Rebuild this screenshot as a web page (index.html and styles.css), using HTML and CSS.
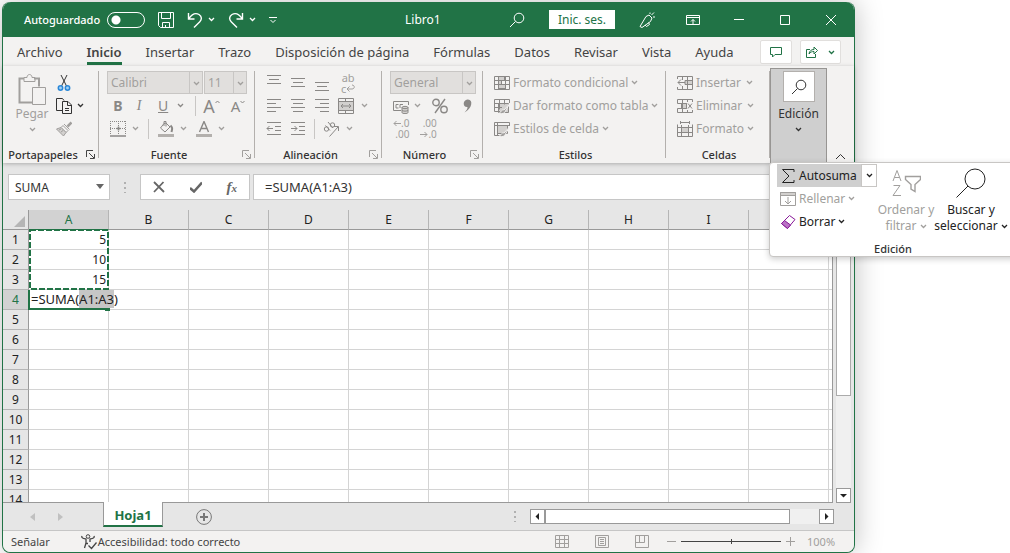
FILE: index.html
```html
<!DOCTYPE html>
<html lang="es">
<head>
  <meta charset="UTF-8">
  <meta name="viewport" content="width=device-width, initial-scale=1.0">
  <title>Libro1</title>
  <link rel="stylesheet" href="styles.css">
</head>
<body>
  <svg class="defs" aria-hidden="true">
    <symbol id="chev" viewBox="0 0 7 5"><path d="M1 1l2.5 2.5L6 1" fill="none" stroke="currentColor" stroke-width="1.3"/></symbol>
    <symbol id="lens" viewBox="0 0 16 16"><circle cx="10" cy="6" r="4.8"/><path d="M6.5 9.5L1 15"/></symbol>
    <symbol id="launch" viewBox="0 0 9 9"><path d="M.5 7V.5H7M3 3l5 5M8.500 4v4.500H4"/></symbol>
  </svg>

  <div class="window">
    <header class="titlebar">
      <div class="quick">
        <label class="autosave">Autoguardado <input type="checkbox" class="toggle"></label>
        <button class="tool" aria-label="Guardar"><svg class="icon" viewBox="0 0 16 16"><path d="M.5.5h15v15h-13l-2-2zM3.500.5v6h9v-6M4.500 15.500v-5h7v5M7.500 15v-2"/></svg></button>
        <button class="tool split" aria-label="Deshacer"><svg class="icon arrow" viewBox="0 0 16 16"><path d="M1.500 1v6h6M1.800 6.700C5 2 9 .8 12 2.500c3 2 3 5 .8 7.200L7 15.500"/></svg><svg class="chev"><use href="#chev"/></svg></button>
        <button class="tool split" aria-label="Rehacer"><svg class="icon arrow" viewBox="0 0 16 16"><path d="M14.500 1v6h-6M14.200 6.700C11 2 7 .8 4 2.500c-3 2-3 5-.8 7.200L9 15.500"/></svg><svg class="chev"><use href="#chev"/></svg></button>
        <button class="tool" aria-label="Personalizar"><svg class="small" viewBox="0 0 8 8"><path d="M0 1.500h8M1.500 4L4 6.500 6.500 4"/></svg></button>
      </div>
      <span class="book">Libro1</span>
      <div class="session">
        <button class="tool" aria-label="Buscar"><svg class="icon"><use href="#lens"/></svg></button>
        <button class="signin">Inic. ses.</button>
        <button class="tool" aria-label="Novedades"><svg class="icon" viewBox="0 0 16 16"><path d="M1 14.500L7 4.500l3-1.500 3 3-1.500 3.500L3 15.500zM6 13l1.500 1.500 3-2-1-2M11 2V.5M12.500 3L15 .5M14 5h2"/></svg></button>
      </div>
      <div class="controls">
        <button class="tool" aria-label="Cinta"><svg class="icon" viewBox="0 0 14 14"><path d="M.5 2.500h13v9H.5zM.5 4.500h13M7 11V6.500M5 8.500l2-2 2 2"/></svg></button>
        <button class="tool" aria-label="Minimizar"><svg class="icon" viewBox="0 0 14 14"><path d="M2 6.500h10"/></svg></button>
        <button class="tool" aria-label="Maximizar"><svg class="icon" viewBox="0 0 14 14"><path d="M2.500 2.500h9v9h-9z"/></svg></button>
        <button class="tool" aria-label="Cerrar"><svg class="icon" viewBox="0 0 14 14"><path d="M2 2l10 10M12 2L2 12"/></svg></button>
      </div>
    </header>

    <nav class="tabs">
      <a href="#">Archivo</a>
      <a href="#" class="current">Inicio</a>
      <a href="#">Insertar</a>
      <a href="#">Trazo</a>
      <a href="#">Disposición de página</a>
      <a href="#">Fórmulas</a>
      <a href="#">Datos</a>
      <a href="#">Revisar</a>
      <a href="#">Vista</a>
      <a href="#">Ayuda</a>
      <div class="share">
        <button aria-label="Comentarios"><svg class="glyph" viewBox="0 0 12 12"><path d="M.5 1.500h11v7H5L2.500 11V8.500h-2z"/></svg></button>
        <button aria-label="Compartir"><svg class="glyph" viewBox="0 0 12 12"><path d="M4 3.500H.5v8h9V8M3 8c.5-3 2-4.500 5-4.500V1l3.500 3.500L8 8V5.500C6 5.500 4.500 6 3 8z"/></svg><svg class="chev"><use href="#chev"/></svg></button>
      </div>
    </nav>

    <div class="ribbon">
      <section class="group clipboard">
        <div class="pair">
          <button class="paste"><svg viewBox="0 0 28 32"><path d="M6 4.500H1.500v24H14M16 4.500h5v8" stroke-width="2"/><path d="M6 3.500h3c0-4 5-4 5 0h3v4H6z"/><path class="sheet" d="M14.500 13.500h13v17h-13z"/></svg>Pegar<svg class="chev"><use href="#chev"/></svg></button>
          <div class="rows dark">
            <div class="row"><button class="tool" aria-label="Cortar"><svg class="icon" viewBox="0 0 16 16"><path d="M5 0l5.500 11M11 0L5.500 11"/><circle class="blue" cx="4.500" cy="13" r="2.200"/><circle class="blue" cx="11.500" cy="13" r="2.200"/></svg></button></div>
            <div class="row"><button class="tool split" aria-label="Copiar"><svg class="icon" viewBox="0 0 16 16"><path d="M6 12.500H.5V.5h6l1.500 2M6.500 3.500H12l3.500 3.500v8.500h-9zM11.500 3.500v4h4M9 10.500h4M9 12.500h4"/></svg><svg class="chev"><use href="#chev"/></svg></button></div>
            <div class="row"><button class="tool gray" aria-label="Copiar formato"><svg class="icon" viewBox="0 0 16 16"><path d="M15.500 1.500l-4 4" stroke-width="2.500"/><path d="M8 3l5.500 5.500M7 4.500l5 5-2 2-5-5z"/><path class="fill" d="M5 6.500L.5 8l7 7L10 11.500zM3 9l2-1M5 11l2-1.500"/></svg></button></div>
          </div>
        </div>
        <h2>Portapapeles <button class="launch on" aria-label="Más portapapeles"><svg><use href="#launch"/></svg></button></h2>
      </section>

      <section class="group font">
        <div class="rows">
          <div class="row">
            <span class="select name"><select aria-label="Fuente" disabled><option>Calibri</option></select><svg class="chev"><use href="#chev"/></svg></span>
            <span class="select size"><select aria-label="Tamaño" disabled><option>11</option></select><svg class="chev"><use href="#chev"/></svg></span>
          </div>
          <div class="row letters">
            <button class="tool"><b>B</b></button>
            <button class="tool"><i>I</i></button>
            <button class="tool split"><u>U</u><svg class="chev"><use href="#chev"/></svg></button>
            <span class="rule"></span>
            <button class="tool big">A<svg class="caret" viewBox="0 0 5 4"><path d="M.5 3l2-2 2 2"/></svg></button>
            <button class="tool mid">A<svg class="caret" viewBox="0 0 5 4"><path d="M.5 1l2 2 2-2"/></svg></button>
          </div>
          <div class="row colors">
            <button class="tool split" aria-label="Bordes"><svg class="icon" viewBox="0 0 16 16"><path d="M.5 0v14M15.500 0v14M8.500 0v14M0 .5h16M0 7.500h16" stroke-dasharray="1 1"/><path d="M0 15h16M6.500 7.500h4M8.500 5.500v4" stroke-width="1.500"/></svg><svg class="chev"><use href="#chev"/></svg></button>
            <span class="rule"></span>
            <button class="tool split" aria-label="Relleno"><svg class="icon" viewBox="0 0 16 16"><path d="M6 2.500L2.500 7l4.500 4 5-5-4-4zM6 5V.5h2v5"/><path d="M12.500 4.500c2 2 2 3 1 6.500" stroke-width="2"/><path class="bar" d="M0 13h16v3H0z"/></svg><svg class="chev"><use href="#chev"/></svg></button>
            <button class="tool split" aria-label="Color"><svg class="icon" viewBox="0 0 16 16"><path d="M3.500 11L8 .5 12.500 11M5 7.500h6" stroke-width="1.400"/><path class="bar" d="M0 13h16v3H0z"/></svg><svg class="chev"><use href="#chev"/></svg></button>
          </div>
        </div>
        <h2>Fuente <button class="launch" aria-label="Más fuente"><svg><use href="#launch"/></svg></button></h2>
      </section>

      <section class="group align">
        <div class="rows">
          <div class="row">
            <button class="tool" aria-label="Arriba"><svg class="icon" viewBox="0 0 16 16"><path d="M1 .5h14M3 4.500h10M1 8.500h14"/></svg></button>
            <button class="tool" aria-label="Medio"><svg class="icon" viewBox="0 0 16 16"><path d="M1 3.500h14M3 7.500h10M1 11.500h14"/></svg></button>
            <button class="tool" aria-label="Abajo"><svg class="icon" viewBox="0 0 16 16"><path d="M1 7.500h14M3 11.500h10M1 15.500h14"/></svg></button>
            <button class="tool wrap" aria-label="Ajustar texto"><span>ab</span><span>c<svg viewBox="0 0 9 7"><path d="M6 .5c3 0 3 4 0 4H1M3.500 2L1 4.500 3.500 7"/></svg></span></button>
          </div>
          <div class="row">
            <button class="tool" aria-label="Izquierda"><svg class="icon" viewBox="0 0 16 16"><path d="M1 1.500h14M1 5.500h9M1 9.500h14M1 13.500h9"/></svg></button>
            <button class="tool" aria-label="Centro"><svg class="icon" viewBox="0 0 16 16"><path d="M1 1.500h14M3 5.500h10M1 9.500h14M3 13.500h10"/></svg></button>
            <button class="tool" aria-label="Derecha"><svg class="icon" viewBox="0 0 16 16"><path d="M1 1.500h14M6 5.500h9M1 9.500h14M6 13.500h9"/></svg></button>
            <button class="tool split" aria-label="Combinar"><svg class="icon" viewBox="0 0 16 16"><path class="fill" d="M.5 3.500h15v9H.5z"/><path d="M.5.5h15v15H.5zM.5 3.500h15M.5 12.500h15M7.500.5v3M7.500 12.500v3M3 8h10M5 6L3 8l2 2M11 6l2 2-2 2"/></svg><svg class="chev"><use href="#chev"/></svg></button>
          </div>
          <div class="row">
            <button class="tool" aria-label="Disminuir sangría"><svg class="icon" viewBox="0 0 16 16"><path d="M1 1.500h14M9 5.500h6M9 9.500h6M1 13.500h14M1 7.500h6M3.500 5L1 7.500 3.500 10"/></svg></button>
            <button class="tool" aria-label="Aumentar sangría"><svg class="icon" viewBox="0 0 16 16"><path d="M1 1.500h14M9 5.500h6M9 9.500h6M1 13.500h14M1 7.500h6M4.500 5L7 7.500 4.500 10"/></svg></button>
            <span class="rule"></span>
            <button class="tool split" aria-label="Orientación"><svg class="icon" viewBox="0 0 16 16"><circle cx="3.500" cy="8" r="2.200"/><path d="M2.500 4.500L7 9.500M5 1l5 6M6.500 15.500L15 6M11 5.500h4.500V10"/><circle cx="9.500" cy="4" r="2.200"/></svg><svg class="chev"><use href="#chev"/></svg></button>
          </div>
        </div>
        <h2>Alineación <button class="launch" aria-label="Más alineación"><svg><use href="#launch"/></svg></button></h2>
      </section>

      <section class="group number">
        <div class="rows">
          <div class="row"><span class="select format"><select aria-label="Formato" disabled><option>General</option></select><svg class="chev"><use href="#chev"/></svg></span></div>
          <div class="row">
            <button class="tool split" aria-label="Moneda"><svg class="icon" viewBox="0 0 16 16"><path d="M8 12.500H.5v-9h15V7M5.500 6.500H3v3.500h2.500M7 10V6.500h3"/><path class="fill" d="M9 9.500v5c0 1.500 6 1.500 6 0v-5c0-1.500-6-1.500-6 0zM9 9.500c0 1.500 6 1.500 6 0M9 12c0 1.500 6 1.500 6 0"/></svg><svg class="chev"><use href="#chev"/></svg></button>
            <button class="tool" aria-label="Porcentaje"><svg class="icon" viewBox="0 0 16 16"><g stroke-width="1.400"><circle cx="4" cy="4.500" r="3.200"/><circle cx="12" cy="11.500" r="3.200"/><path d="M13 1L3 15"/></g></svg></button>
            <button class="tool" aria-label="Millares"><svg class="icon" viewBox="0 0 16 16"><path class="solid" d="M8.500 1.500c6-.5 5 9-3 13 2-2 3-3.500 3-5.500-5 .5-5-7 0-7.500z"/></svg></button>
          </div>
          <div class="row">
            <button class="tool decimals" aria-label="Aumentar decimales"><span><svg viewBox="0 0 8 7"><path d="M8 3.500H1M3.500 1L1 3.500 3.500 6"/></svg>.0</span><span>.00</span></button>
            <button class="tool decimals" aria-label="Disminuir decimales"><span>.00</span><span><svg viewBox="0 0 8 7"><path d="M0 3.500h7M4.500 1L7 3.500 4.500 6"/></svg>.0</span></button>
          </div>
        </div>
        <h2>Número <button class="launch" aria-label="Más número"><svg><use href="#launch"/></svg></button></h2>
      </section>

      <section class="group styles">
        <div class="rows">
          <div class="row"><button class="tool text"><svg class="icon" viewBox="0 0 16 16"><path class="fill" d="M4.500 1.500h6v4h-3v4h4v4h-7z"/><path d="M.5 1.500h15v13H.5zM.5 5.500h15M.5 9.500h15M4.500 1.500v13M11.500 1.500v13"/></svg>Formato condicional<svg class="chev"><use href="#chev"/></svg></button></div>
          <div class="row"><button class="tool text"><svg class="icon" viewBox="0 0 16 16"><path class="fill" d="M4.500 5.500h10v9h-10z"/><path d="M6 13.500H.5v-12h15V5M.5 5.500H12M.5 9.500H8M5.500 1.500v10M10.500 1.500v5"/><path class="brush" d="M15.500 6L10 12c-2-1-3 2-5 3.500 3 .5 6 0 6.500-2.500z"/></svg>Dar formato como tabla<svg class="chev"><use href="#chev"/></svg></button></div>
          <div class="row"><button class="tool text"><svg class="icon" viewBox="0 0 16 16"><path class="fill" d="M3.500 4.500h10v8h-10z"/><path d="M6 14.500H.5v-13h15V5M.5 4.500h15M3.500 1.500v13"/><path class="brush" d="M15.500 6L10 12c-2-1-3 2-5 3.500 3 .5 6 0 6.500-2.500z"/></svg>Estilos de celda<svg class="chev"><use href="#chev"/></svg></button></div>
        </div>
        <h2>Estilos</h2>
      </section>

      <section class="group cells">
        <div class="rows">
          <div class="row"><button class="tool text wide"><svg class="icon" viewBox="0 0 16 16"><path class="fill" d="M8 5.500h7.500v4H8z"/><path d="M.5 4V1.500h15v13H.5V12M5.500 1.500V5M10.500 1.500v13M5.500 11v3.500M8 5.500h7.500M8 9.500h7.500M1 7.500h7M4 4.500l-3 3 3 3"/></svg>Insertar<svg class="chev"><use href="#chev"/></svg></button></div>
          <div class="row"><button class="tool text wide"><svg class="icon" viewBox="0 0 16 16"><path class="fill" d="M4.500 5.500h5v5h-5z"/><path d="M.5 5.500v-4h15V4M.5 5.500h9v5h-9v4h15V12M5.500 1.500v13M10.500 1.500V4M10.500 12v2.500M11 5.500l4 5M15 5.500l-4 5"/></svg>Eliminar<svg class="chev"><use href="#chev"/></svg></button></div>
          <div class="row"><button class="tool text"><svg class="icon" viewBox="0 0 16 16"><path class="fill" d="M4.500 6.500h7v5h-7z"/><path d="M.5 3.500v12h15v-12M.5 6.500h15M.5 11.500h15M4.500 4v11.500M11.500 4v11.500M3 1.500h10M3.500 0v3M12.500 0v3"/></svg>Formato<svg class="chev"><use href="#chev"/></svg></button></div>
        </div>
        <h2>Celdas</h2>
      </section>

      <div class="editing">
        <button class="open"><span class="tile"><svg class="icon"><use href="#lens"/></svg></span>Edición<svg class="chev"><use href="#chev"/></svg></button>
        <div class="flyout">
          <div class="actions">
            <div class="sum"><button class="main"><svg class="icon" viewBox="0 0 16 16"><path d="M14 4V1.500H2.500L9 8l-6.500 6.500H14V12"/></svg>Autosuma</button><button class="more" aria-label="Más sumas"><svg class="chev"><use href="#chev"/></svg></button></div>
            <button class="item off"><svg class="icon" viewBox="0 0 16 16"><path class="fill" d="M.5 1.500h15v3H.5z"/><path d="M.5 1.500h15v13H.5zM.5 4.500h15M8 6v7M5 10l3 3 3-3"/></svg>Rellenar<svg class="chev"><use href="#chev"/></svg></button>
            <button class="item"><svg class="icon" viewBox="0 0 16 16"><path class="eraser" d="M9.500 1.500l5.500 4-7.500 9-6-5z"/><path class="tip" d="M4.500 6.500l6 4.500-3 3.500-6-5z"/></svg>Borrar<svg class="chev"><use href="#chev"/></svg></button>
          </div>
          <button class="large off"><svg viewBox="0 0 30 30"><path d="M2 13L6 2.500 10 13M3.500 9.500h5M2.500 17.500H9L2 27.500h8"/><path d="M14.500 8.500h15v3l-5.500 5v7l-4-2.500v-4.500l-5.500-5z" stroke-width="1.400"/></svg><span>Ordenar y<br>filtrar <svg class="chev"><use href="#chev"/></svg></span></button>
          <button class="large"><svg viewBox="0 0 30 30"><circle cx="19" cy="11" r="10"/><path d="M12 18L.5 29.500"/></svg><span>Buscar y<br>seleccionar <svg class="chev"><use href="#chev"/></svg></span></button>
          <h2>Edición</h2>
        </div>
      </div>
      <button class="collapse" aria-label="Contraer"><svg viewBox="0 0 11 7"><path d="M1 6l4.500-4.500L10 6"/></svg></button>
    </div>

    <div class="formula">
      <label class="namebox"><input type="text" value="SUMA" aria-label="Cuadro de nombres"><svg viewBox="0 0 8 5"><path d="M0 0h8L4 5z"/></svg></label>
      <span class="dots"></span>
      <div class="entry">
        <button aria-label="Cancelar"><svg viewBox="0 0 12 12"><path d="M1 1l10 10M10.500 1L1 11"/></svg></button>
        <button aria-label="Introducir"><svg viewBox="0 0 12 12"><path d="M0 7l4 3.500L12 1.500" stroke-width="2.500"/></svg></button>
        <button class="fx" aria-label="Insertar función">f<small>x</small></button>
      </div>
      <input type="text" class="expression" value="=SUMA(A1:A3)" aria-label="Barra de fórmulas">
    </div>

    <div class="workspace">
      <div class="grid">
        <table>
          <thead>
            <tr><th class="corner"><svg viewBox="0 0 11 11"><path d="M11 0v11H0z"/></svg></th><th class="active">A</th><th>B</th><th>C</th><th>D</th><th>E</th><th>F</th><th>G</th><th>H</th><th>I</th><th>J</th><th class="rest"></th></tr>
          </thead>
          <tbody>
            <tr><th>1</th><td class="origin">5<svg class="ants"><rect x="1" y="1" width="78" height="59"/></svg></td><td></td><td></td><td></td><td></td><td></td><td></td><td></td><td></td><td></td><td></td></tr>
            <tr><th>2</th><td>10</td><td></td><td></td><td></td><td></td><td></td><td></td><td></td><td></td><td></td><td></td></tr>
            <tr><th>3</th><td>15</td><td></td><td></td><td></td><td></td><td></td><td></td><td></td><td></td><td></td><td></td></tr>
            <tr><th class="active">4</th><td class="editor"><span class="typed">=SUMA(<mark>A1:A3</mark>)</span></td><td></td><td></td><td></td><td></td><td></td><td></td><td></td><td></td><td></td><td></td></tr>
            <tr><th>5</th><td></td><td></td><td></td><td></td><td></td><td></td><td></td><td></td><td></td><td></td><td></td></tr>
            <tr><th>6</th><td></td><td></td><td></td><td></td><td></td><td></td><td></td><td></td><td></td><td></td><td></td></tr>
            <tr><th>7</th><td></td><td></td><td></td><td></td><td></td><td></td><td></td><td></td><td></td><td></td><td></td></tr>
            <tr><th>8</th><td></td><td></td><td></td><td></td><td></td><td></td><td></td><td></td><td></td><td></td><td></td></tr>
            <tr><th>9</th><td></td><td></td><td></td><td></td><td></td><td></td><td></td><td></td><td></td><td></td><td></td></tr>
            <tr><th>10</th><td></td><td></td><td></td><td></td><td></td><td></td><td></td><td></td><td></td><td></td><td></td></tr>
            <tr><th>11</th><td></td><td></td><td></td><td></td><td></td><td></td><td></td><td></td><td></td><td></td><td></td></tr>
            <tr><th>12</th><td></td><td></td><td></td><td></td><td></td><td></td><td></td><td></td><td></td><td></td><td></td></tr>
            <tr><th>13</th><td></td><td></td><td></td><td></td><td></td><td></td><td></td><td></td><td></td><td></td><td></td></tr>
            <tr><th>14</th><td></td><td></td><td></td><td></td><td></td><td></td><td></td><td></td><td></td><td></td><td></td></tr>
          </tbody>
        </table>
      </div>
      <div class="vscroll">
        <span class="thumb"></span>
        <button class="step" aria-label="Bajar"><svg viewBox="0 0 7 7"><path d="M0 2h7L3.500 5.500z"/></svg></button>
      </div>
    </div>

    <div class="sheets">
      <button class="nav" aria-label="Anterior"><svg viewBox="0 0 5 8"><path d="M5 0v8L0 4z"/></svg></button>
      <button class="nav" aria-label="Siguiente"><svg viewBox="0 0 5 8"><path d="M0 0v8l5-4z"/></svg></button>
      <button class="sheet-tab">Hoja1</button>
      <button class="add" aria-label="Nueva hoja"><svg viewBox="0 0 16 16"><circle cx="8" cy="8" r="7.400"/><path d="M8 4v8M4 8h8" stroke-width="2"/></svg></button>
      <span class="dots"></span>
      <div class="hscroll">
        <button class="step" aria-label="A la izquierda"><svg viewBox="0 0 7 7"><path d="M5 0v7L1.500 3.500z"/></svg></button>
        <span class="thumb"></span>
        <button class="step" aria-label="A la derecha"><svg viewBox="0 0 7 7"><path d="M2 0v7l3.500-3.500z"/></svg></button>
      </div>
    </div>

    <footer class="status">
      <span>Señalar</span>
      <span class="access"><svg viewBox="0 0 16 16"><circle cx="7" cy="2.500" r="1.800"/><path d="M1 2c-1 2 2 2.500 4 3v4l-1.500 5M13 2c1 2-2 2.500-4 3v3M5 9.500h2M7.500 11.500l3 3 5-6" stroke-width="1.300"/></svg>Accesibilidad: todo correcto</span>
      <div class="views">
        <button aria-label="Normal"><svg viewBox="0 0 14 14"><path d="M.5.5h13v12H.5zM4.500.5v12M9.500.5v12M.5 4.500h13M.5 8.500h13"/></svg></button>
        <button aria-label="Diseño de página"><svg viewBox="0 0 14 14"><path d="M.5.5h13v12H.5zM3.500 2.500h7v8h-7zM5 4.500h4M5 6.500h4M5 8.500h4"/></svg></button>
        <button aria-label="Saltos de página"><svg viewBox="0 0 14 14"><path d="M.5.5h13v12H.5zM4.500.5v7M9.500.5v7M.5 7.500h9"/></svg></button>
      </div>
      <div class="zoom">
        <button aria-label="Alejar"><svg viewBox="0 0 9 9"><path d="M0 4.500h9"/></svg></button>
        <input type="range" min="10" max="190" value="100" aria-label="Zoom">
        <button aria-label="Acercar"><svg viewBox="0 0 9 9"><path d="M0 4.500h9M4.500 0v9"/></svg></button>
      </div>
      <span class="percent">100%</span>
    </footer>
  </div>
</body>
</html>
```
FILE: styles.css
```css
* {
  box-sizing: border-box;
}
body {
  margin: 0;
  padding: 2px 155px 0 2px;
  height: 100vh;
  overflow: hidden;
  background: #fff;
  color: #444;
  font: 12px/16px "Noto Sans", "Open Sans", sans-serif;
}
button {
  padding: 0;
  border: 0;
  background: none;
  color: inherit;
  font: inherit;
}
svg {
  display: block;
  flex: none;
  fill: none;
  stroke: currentColor;
}
h2 {
  margin: 0;
  font-size: 11px;
  font-weight: 500;
  line-height: 16px;
  color: #333;
  text-align: center;
}
.defs {
  position: absolute;
  width: 0;
  height: 0;
}
.icon {
  width: 16px;
  height: 16px;
}
.chev {
  width: 7px;
  height: 5px;
}
.fill {
  fill: #d2d0ce;
}
.window {
  display: flex;
  flex-direction: column;
  height: 100%;
  border: 1px solid #217346;
  border-top: 0;
  border-radius: 8px;
  background: #e6e6e6;
  box-shadow: 0 0 28px rgba(0, 0, 0, 0.25);
}

/* title bar */
.titlebar {
  display: grid;
  grid-template-columns: 402px 1fr auto auto;
  align-items: center;
  height: 35px;
  padding-right: 16px;
  border-radius: 8px 8px 0 0;
  background: #217346;
  color: #fff;
}
.quick {
  display: flex;
  align-items: center;
  gap: 13px;
  padding-left: 21px;
}
.autosave {
  display: flex;
  align-items: center;
  gap: 7px;
  font-size: 11px;
  font-weight: 500;
}
.arrow {
  stroke-width: 1.4;
}
.toggle {
  appearance: none;
  width: 38px;
  height: 16px;
  margin: 0;
  border: 1px solid #fff;
  border-radius: 8px;
  background: radial-gradient(circle at 8px 7px, #fff 4px, transparent 5px);
}
.tool {
  display: flex;
  align-items: center;
  justify-content: center;
}
.split {
  gap: 5px;
}
.small {
  width: 8px;
  height: 8px;
}
.session {
  display: flex;
  align-items: center;
  gap: 24px;
}
.signin {
  width: 66px;
  height: 19px;
  background: #fff;
  color: #217346;
}
.controls {
  display: flex;
  gap: 32px;
  padding-left: 31px;
}
.controls .icon {
  width: 14px;
  height: 14px;
}

/* tabs */
.tabs {
  display: flex;
  gap: 24px;
  height: 29px;
  padding: 0 13px 0 14px;
  background: #f3f2f1;
  font-size: 13px;
  line-height: 18px;
}
.tabs a {
  padding-top: 6px;
  color: #444;
  text-decoration: none;
  white-space: nowrap;
}
.tabs .current {
  height: 28px;
  border-bottom: 3px solid #217346;
  font-weight: 600;
}
.share {
  display: flex;
  gap: 8px;
  margin-left: auto;
  padding-top: 3px;
}
.share button {
  display: flex;
  align-items: center;
  justify-content: center;
  gap: 10px;
  width: 32px;
  height: 24px;
  border: 1px solid #e1dfdd;
  border-radius: 2px;
  background: #fff;
  color: #217346;
}
.share button:last-child {
  width: 41px;
}
.glyph {
  width: 12px;
  height: 12px;
}

/* ribbon */
.ribbon {
  position: relative;
  z-index: 2;
  display: grid;
  grid-template-columns: 96px 156px 127px 101px 183px 104px 57px 1fr;
  height: 97px;
  background: #f3f2f1;
  box-shadow: 0 1px 4px rgba(0, 0, 0, 0.25);
  color: #a19f9d;
}
.group {
  position: relative;
  display: flex;
  flex-direction: column;
  justify-content: space-between;
  padding: 5px 0 0 8px;
}
.group::after {
  content: "";
  position: absolute;
  top: 5px;
  right: 0;
  bottom: 5px;
  border-right: 1px solid #b3b0ad;
}
.group h2 {
  display: flex;
  align-items: center;
  justify-content: center;
  padding-right: 24px;
}
.launch {
  position: absolute;
  right: 4px;
  bottom: 4px;
  color: #a19f9d;
}
.launch.on {
  color: #444;
}
.launch svg {
  width: 9px;
  height: 9px;
}
.row {
  display: flex;
  align-items: center;
  height: 23px;
}
.group .row .icon {
  stroke: #8a8886;
}
.group .dark .row .icon {
  stroke: currentColor;
}
.rule {
  height: 20px;
  border-left: 1px solid #c8c6c4;
}
.group.clipboard {
  padding-left: 8px;
}
.pair {
  display: flex;
  gap: 3px;
}
.paste {
  display: flex;
  flex-direction: column;
  align-items: center;
  width: 42px;
  padding-top: 3px;
}
.paste svg:first-child {
  width: 28px;
  height: 32px;
}
.paste .chev {
  margin-top: 5px;
}
.sheet {
  fill: #f3f2f1;
}
.dark {
  color: #333;
}
.gray {
  color: #a19f9d;
}
.blue {
  stroke: #2b88d8;
  stroke-width: 1.5;
  fill: #9fd0f5;
}
.bar {
  fill: #b3b0ad;
  stroke: none;
}
.brush {
  fill: #a19f9d;
  stroke: #f3f2f1;
}
.solid {
  fill: #8a8886;
  stroke: none;
}
.select {
  position: relative;
  height: 23px;
}
.select select {
  appearance: none;
  width: 100%;
  height: 23px;
  padding: 0 0 0 3px;
  border: 1px solid #c8c6c4;
  border-radius: 0;
  background: linear-gradient(#c8c6c4, #c8c6c4) right 12px top / 1px 100% no-repeat #e1dfdd;
  color: #a19f9d;
  font: inherit;
  opacity: 1;
}
.select .chev {
  position: absolute;
  top: 10px;
  right: 3px;
}
.name {
  width: 96px;
  margin-right: 1px;
}
.size {
  width: 43px;
}
.format {
  width: 86px;
}
.letters {
  gap: 11px;
  padding-left: 6px;
  color: #8a8886;
  font-size: 14px;
}
.letters .split {
  gap: 9px;
  padding-left: 3px;
}
.letters .tool {
  min-width: 10px;
}
.letters .rule {
  margin-right: -4px;
}
.letters i {
  font-family: "Liberation Serif", serif;
}
.letters .big {
  font-size: 18px;
}
.letters .mid {
  font-size: 15px;
}
.caret {
  width: 5px;
  height: 4px;
  margin-bottom: 8px;
}
.colors {
  gap: 9px;
  padding-left: 3px;
}
.colors .split {
  gap: 6px;
}
.align .row {
  gap: 8px;
  padding-left: 3px;
}
.align .split {
  gap: 7px;
}
.wrap {
  flex-direction: column;
  padding-left: 3px;
  font-size: 11px;
  line-height: 11px;
}
.wrap span {
  display: flex;
  align-items: center;
}
.wrap svg {
  width: 9px;
  height: 8px;
}
.number .row:nth-child(n + 2) {
  gap: 11px;
  padding-left: 3px;
}
.decimals {
  flex-direction: column;
  align-items: flex-end;
  font-size: 10px;
  line-height: 11px;
}
.decimals span {
  display: flex;
  align-items: center;
}
.decimals svg {
  width: 8px;
  height: 7px;
}
.group.styles,
.group.cells {
  padding-left: 11px;
}
.group.styles h2,
.group.cells h2 {
  padding-right: 9px;
}
.text {
  gap: 3px;
}
.wide .chev {
  margin-left: 2px;
}
.editing {
  position: relative;
  padding-top: 2px;
  color: #333;
}
.open {
  display: flex;
  flex-direction: column;
  align-items: center;
  width: 57px;
  height: 95px;
  padding-top: 2px;
  border: 1px solid #979593;
  border-bottom: 0;
  background: #cfcfcf;
}
.tile {
  display: flex;
  align-items: center;
  justify-content: center;
  width: 32px;
  height: 31px;
  margin-bottom: 4px;
  border: 1px solid #b3b0ad;
  background: #fff;
}
.open .chev {
  margin-top: 5px;
}
.collapse {
  align-self: end;
  padding: 0 0 3px 8px;
  color: #333;
}
.collapse svg {
  width: 11px;
  height: 7px;
}

/* flyout under the Edición button */
.flyout {
  position: absolute;
  top: 96px;
  left: -1px;
  display: grid;
  grid-template-columns: 102px 54px 76px;
  align-content: start;
  width: 248px;
  height: 95px;
  padding: 1px 0 0 7px;
  border: 1px solid #c8c6c4;
  border-radius: 4px 0 0 4px;
  background: #fff;
  box-shadow: 0 2px 6px rgba(0, 0, 0, 0.2);
  color: #222;
}
.flyout h2 {
  grid-column: 1 / -1;
}
.sum {
  display: flex;
}
.main,
.item {
  display: flex;
  align-items: center;
  gap: 3px;
  height: 23px;
  padding-left: 3px;
}
.main {
  width: 84px;
  background: #cfcfcf;
}
.more {
  display: grid;
  place-items: center;
  width: 16px;
  border: 1px solid #c8c6c4;
}
.off {
  color: #a19f9d;
}
.eraser {
  fill: #fff;
  stroke: #881798;
}
.tip {
  fill: #b973c4;
  stroke: #881798;
}
.large {
  display: flex;
  flex-direction: column;
  align-items: center;
  gap: 4px;
  padding-top: 4px;
  white-space: nowrap;
}
.large > svg {
  width: 30px;
  height: 30px;
}
.large .chev {
  display: inline-block;
  vertical-align: middle;
}
.actions {
  min-height: 77px;
}

/* formula bar */
.formula {
  display: flex;
  align-items: center;
  padding: 11px 0 10px 5px;
}
.formula input {
  width: 100%;
  height: 26px;
  padding: 0 6px;
  border: 1px solid #c6c6c6;
  border-radius: 0;
  background: #fff;
  color: #333;
  font: inherit;
}
.formula .expression {
  flex: 1;
  padding-left: 11px;
  margin-left: 3px;
  font-size: 13px;
}
.namebox {
  position: relative;
  width: 102px;
}
.namebox svg {
  position: absolute;
  top: 10px;
  right: 6px;
  width: 8px;
  height: 5px;
  fill: #666;
  stroke: none;
}
.dots {
  width: 2px;
  height: 11px;
  margin: 0 14px;
  background: repeating-linear-gradient(#b0b0b0 0 2px, transparent 2px 5px);
}
.entry {
  display: flex;
  align-items: center;
  justify-content: space-between;
  width: 110px;
  height: 26px;
  padding: 0 12px;
  border: 1px solid #c6c6c6;
  background: #fff;
  color: #666;
}
.entry svg {
  width: 12px;
  height: 12px;
  stroke-width: 1.8;
}
.fx {
  font: italic bold 15px/16px "Liberation Serif", serif;
}
.fx small {
  font-size: 11px;
}

/* cells */
.workspace {
  display: flex;
  flex: 1;
  gap: 3px;
  min-height: 0;
  padding-right: 3px;
}
.grid {
  flex: 1;
  overflow: hidden;
  border-right: 1px solid #999;
  border-bottom: 1px solid #999;
  background: #fff;
}
table {
  width: 100%;
  table-layout: fixed;
  border-spacing: 0;
  color: #222;
}
th,
td {
  width: 80px;
  height: 20px;
  padding: 0;
  border-right: 1px solid #d4d4d4;
  border-bottom: 1px solid #d4d4d4;
  font-weight: 400;
  line-height: 18px;
}
tbody th,
tbody td {
  padding-top: 1px;
}
th {
  border-color: #b5b5b5;
  background: #e6e6e6;
}
thead th {
  border-bottom-color: #999;
}
th:first-child {
  width: 26px;
  border-right-color: #999;
}
.corner svg {
  width: 11px;
  height: 11px;
  margin: 3px 3px 0 auto;
  fill: #b5b5b5;
  stroke: none;
}
th.active {
  background: #d2d2d2;
  color: #217346;
}
thead th.active {
  border-bottom-color: #217346;
}
th.rest,
td:last-child {
  width: auto;
  border-right: 0;
}
td {
  padding-right: 2px;
  text-align: right;
}
.origin,
.editor {
  position: relative;
}
.ants {
  position: absolute;
  z-index: 1;
  top: -1px;
  left: 0;
  width: 80px;
  height: 61px;
  stroke: #217346;
  stroke-width: 2;
  stroke-dasharray: 6 2;
}
tbody .editor {
  padding: 0 0 0 2px;
  border-right-color: transparent;
  border-bottom: 2px solid #217346;
  text-align: left;
  white-space: nowrap;
  font-size: 13px;
}
.editor::before {
  content: "";
  position: absolute;
  top: 0;
  left: -1px;
  height: 20px;
  border-left: 2px solid #217346;
}
.editor::after {
  content: "";
  position: absolute;
  right: -2px;
  bottom: -3px;
  width: 5px;
  height: 4px;
  background: #217346;
}
.typed {
  position: relative;
  z-index: 1;
  display: block;
  height: 18px;
}
mark {
  background: #c6c6c6;
  color: inherit;
}
.vscroll {
  display: flex;
  flex-direction: column;
  width: 15px;
  background: #f0f0f0;
}
.vscroll .thumb {
  flex: 0 1 186px;
  margin-bottom: auto;
  border: 1px solid #ababab;
  background: #fff;
}
.step {
  display: grid;
  place-items: center;
  width: 15px;
  height: 15px;
  border: 1px solid #999;
  background: #fff;
}
.step svg {
  width: 7px;
  height: 7px;
  fill: #222;
  stroke: none;
}

/* sheet tabs */
.sheets {
  display: flex;
  align-items: center;
  height: 27px;
  padding: 0 20px 0 27px;
}
.nav {
  width: 5px;
  margin-right: 23px;
}
.nav svg {
  width: 5px;
  height: 8px;
  fill: #c0c0c0;
  stroke: none;
}
.sheet-tab {
  align-self: start;
  width: 60px;
  height: 25px;
  margin: -1px 33px 0 17px;
  padding-top: 2px;
  border: 1px solid #999;
  border-top: 0;
  border-bottom: 2px solid #217346;
  background: #fff;
  color: #217346;
  font-size: 13px;
  font-weight: 700;
}
.add {
  margin-right: auto;
  color: #777;
}
.add svg {
  width: 16px;
  height: 16px;
}
.hscroll {
  display: flex;
  width: 304px;
  background: #f0f0f0;
}
.hscroll .thumb {
  width: 245px;
  margin-right: auto;
  border: 1px solid #999;
  background: #fff;
}

/* status bar */
.status {
  display: flex;
  align-items: center;
  height: 22px;
  padding: 0 19px 0 8px;
  border-top: 1px solid #c6c6c6;
  border-radius: 0 0 8px 8px;
  background: #f3f2f1;
  font-size: 11px;
}
.access {
  display: flex;
  align-items: center;
  gap: 1px;
  margin-left: 31px;
}
.access svg {
  width: 16px;
  height: 16px;
}
.views {
  display: flex;
  gap: 26px;
  margin-left: auto;
  color: #a19f9d;
}
.views svg {
  width: 14px;
  height: 14px;
}
.zoom {
  display: flex;
  align-items: center;
  gap: 5px;
  margin-left: 18px;
  color: #a19f9d;
}
.zoom svg {
  width: 9px;
  height: 9px;
}
.zoom input {
  appearance: none;
  width: 100px;
  height: 5px;
  margin: 0;
  background: linear-gradient(#444, #444) center / 100% 1px no-repeat;
}
.zoom input::-webkit-slider-thumb {
  appearance: none;
  width: 1px;
  height: 5px;
  background: #444;
}
.percent {
  width: 28px;
  margin-left: 12px;
  color: #a19f9d;
}
```
